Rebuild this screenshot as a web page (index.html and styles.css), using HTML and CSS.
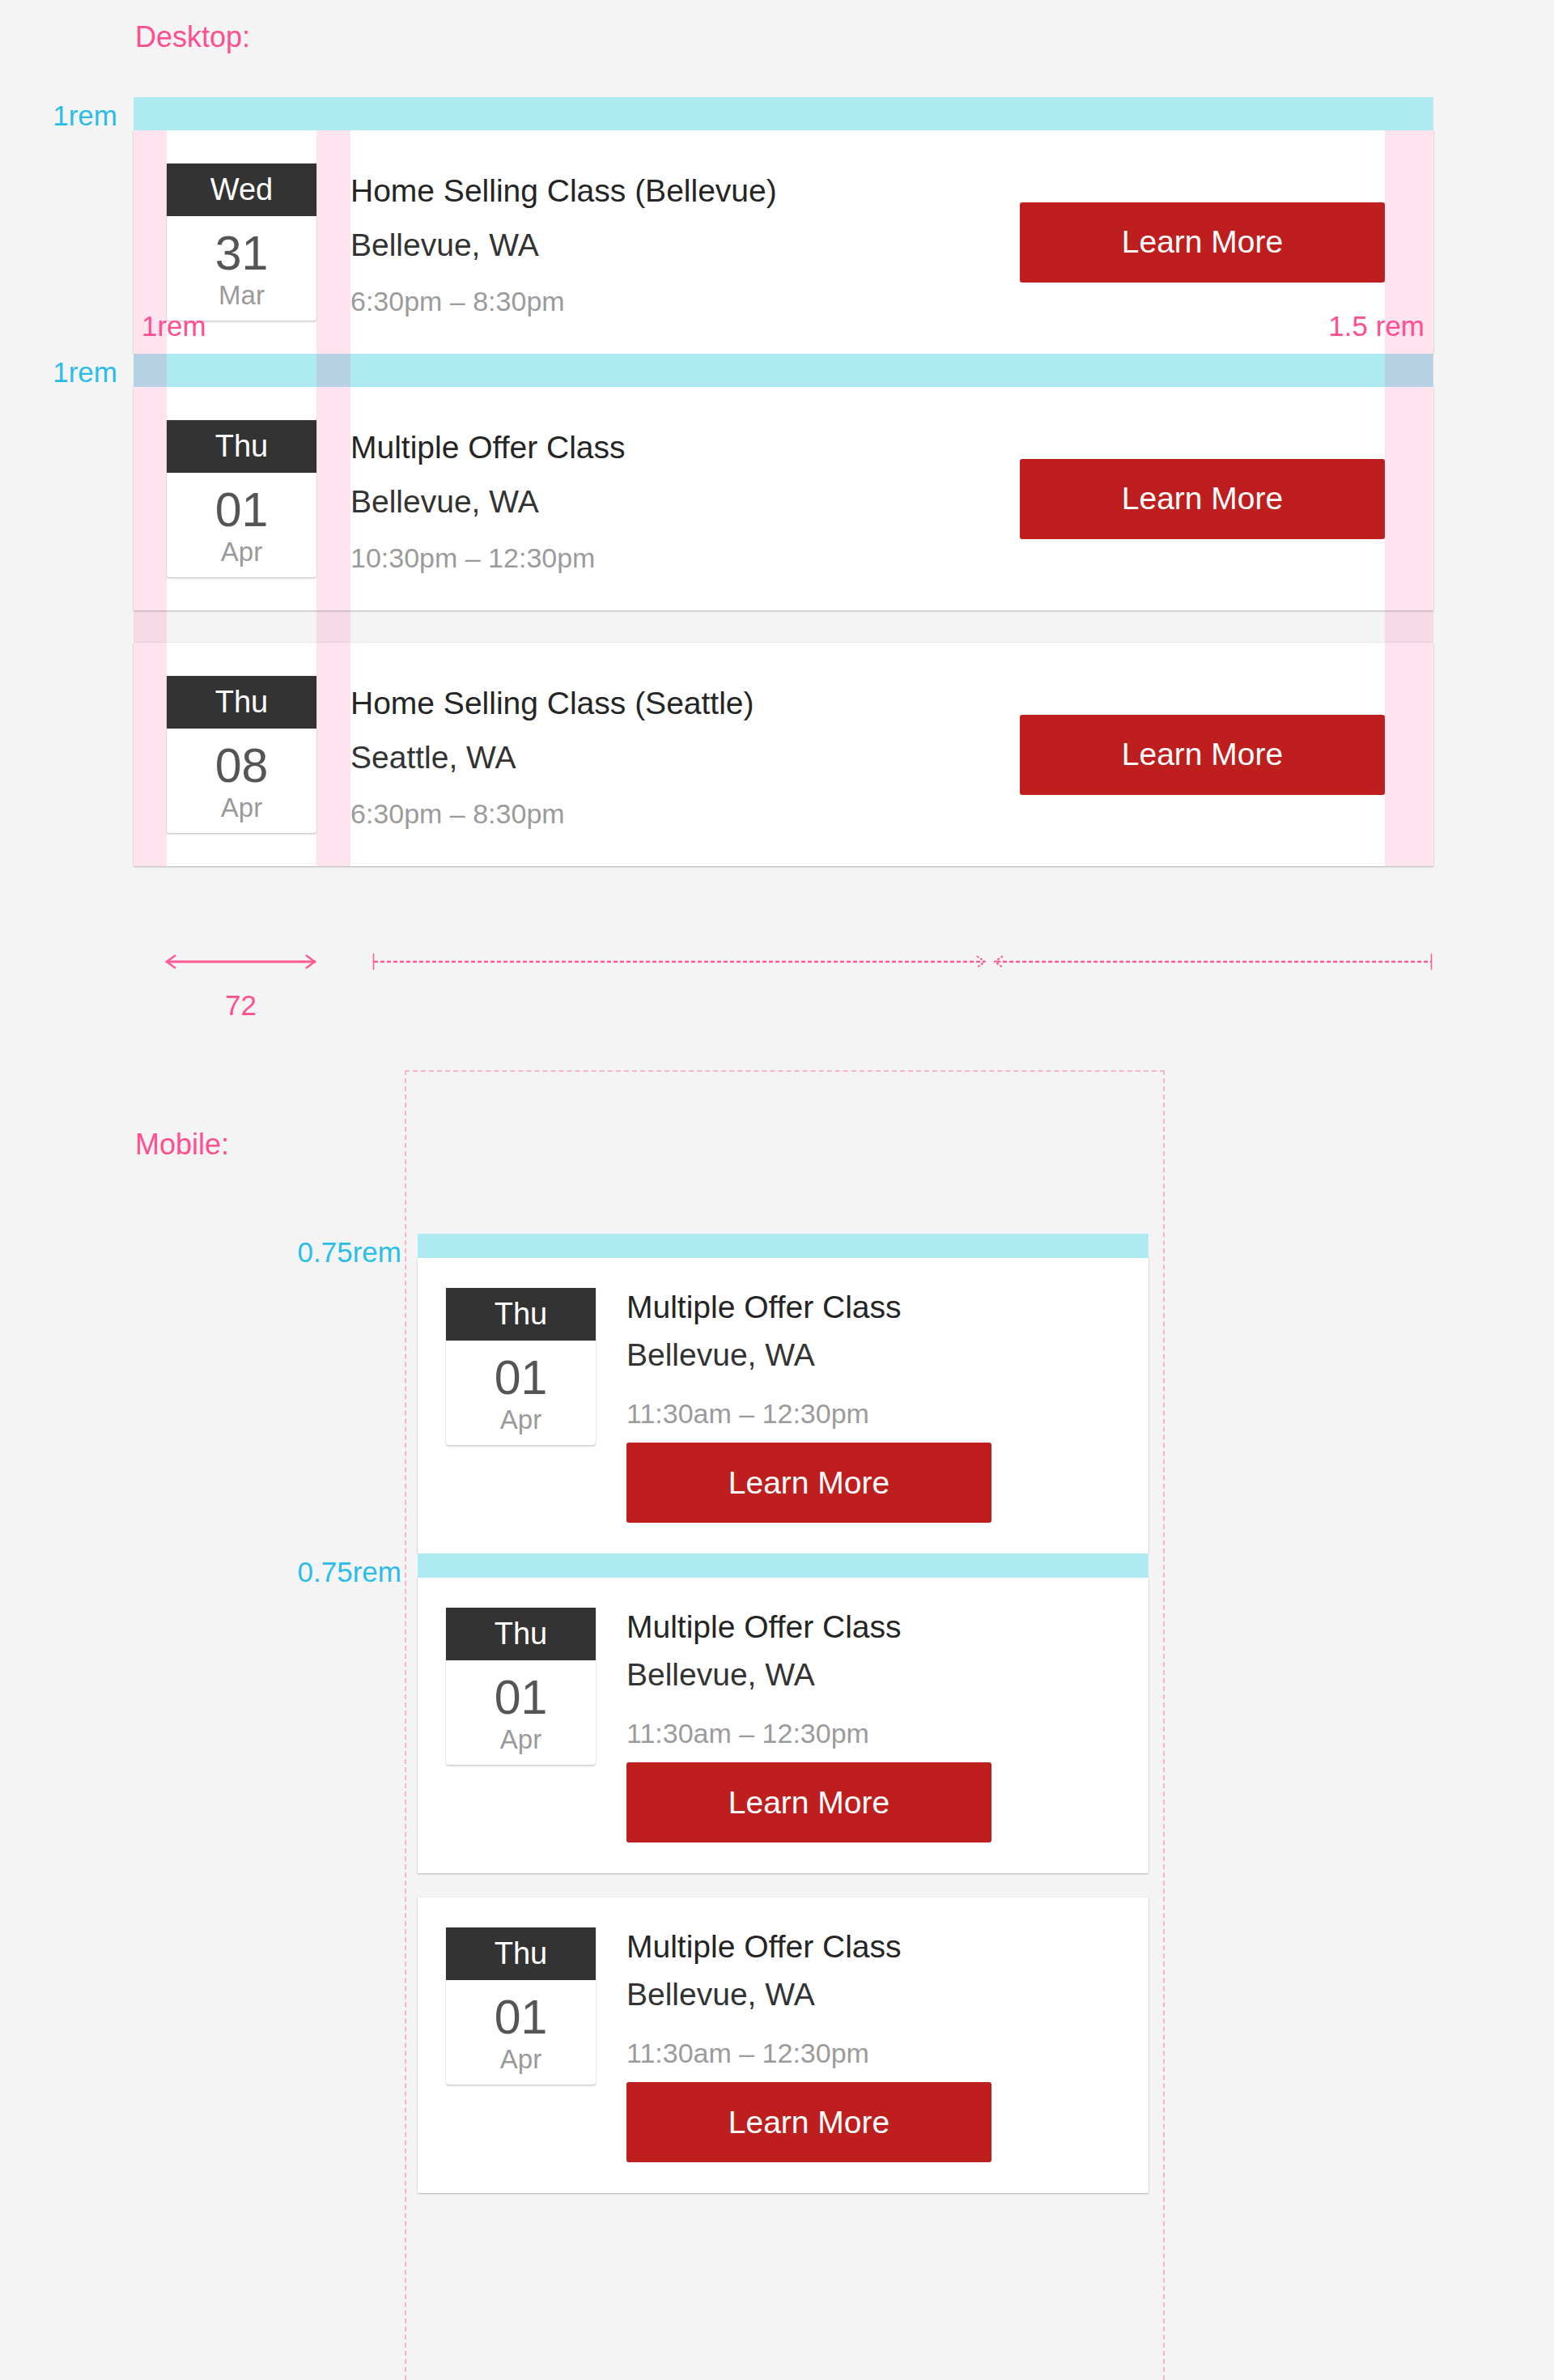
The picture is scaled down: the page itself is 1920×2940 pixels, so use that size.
FILE: index.html
```html
<!DOCTYPE html>
<html lang="en">
<head>
  <meta charset="UTF-8">
  <title>Event Card Spec</title>
  <link rel="stylesheet" href="styles.css">
</head>
<body>

  <div class="page">

    <section class="spec spec-desktop">
      <h2 class="spec-title">Desktop:</h2>

      <div class="event-list">
        <div class="guide-margin"><span class="note note-blue">1rem</span></div>

        <article class="event">
          <div class="date-box">
            <div class="date-day">Wed</div>
            <div class="date-num">31</div>
            <div class="date-month">Mar</div>
          </div>
          <div class="event-info">
            <div class="event-name">Home Selling Class (Bellevue)</div>
            <div class="event-place">Bellevue, WA</div>
            <div class="event-time">6:30pm – 8:30pm</div>
          </div>
          <a class="event-btn" href="#">Learn More</a>
        </article>

        <div class="guide-margin"><span class="note note-blue">1rem</span></div>

        <article class="event">
          <div class="date-box">
            <div class="date-day">Thu</div>
            <div class="date-num">01</div>
            <div class="date-month">Apr</div>
          </div>
          <div class="event-info">
            <div class="event-name">Multiple Offer Class</div>
            <div class="event-place">Bellevue, WA</div>
            <div class="event-time">10:30pm – 12:30pm</div>
          </div>
          <a class="event-btn" href="#">Learn More</a>
        </article>

        <div class="event-gap"></div>

        <article class="event">
          <div class="date-box">
            <div class="date-day">Thu</div>
            <div class="date-num">08</div>
            <div class="date-month">Apr</div>
          </div>
          <div class="event-info">
            <div class="event-name">Home Selling Class (Seattle)</div>
            <div class="event-place">Seattle, WA</div>
            <div class="event-time">6:30pm – 8:30pm</div>
          </div>
          <a class="event-btn" href="#">Learn More</a>
        </article>

        <!-- padding guides drawn over the cards -->
        <div class="guide-pad guide-pad-left"></div>
        <div class="guide-pad guide-pad-date"></div>
        <div class="guide-pad guide-pad-right"></div>
        <span class="note note-pink note-pad-left">1rem</span>
        <span class="note note-pink note-pad-right">1.5 rem</span>
      </div>

      <div class="measure">
        <svg class="measure-lines" width="1606" height="40" viewBox="0 0 1606 40">
          <g stroke="#ff5b97" fill="none">
            <line x1="40" y1="20" x2="225" y2="20" stroke-width="3"/>
            <polyline points="52,12 41,20 52,28" stroke-width="2.5"/>
            <polyline points="213,12 224,20 213,28" stroke-width="2.5"/>

            <line x1="296.5" y1="10" x2="296.5" y2="30" stroke-width="1.5"/>
            <line x1="297" y1="20" x2="1051" y2="20" stroke-width="2.5" stroke-dasharray="5 3"/>
            <polyline points="1042,13 1052,20 1042,27" stroke-width="2" stroke-dasharray="3 2"/>

            <polyline points="1074,13 1064,20 1074,27" stroke-width="2" stroke-dasharray="3 2"/>
            <line x1="1066" y1="20" x2="1603" y2="20" stroke-width="2.5" stroke-dasharray="5 3"/>
            <line x1="1603.5" y1="10" x2="1603.5" y2="30" stroke-width="1.5"/>
          </g>
        </svg>
        <span class="note note-pink measure-label">72</span>
      </div>
    </section>

    <section class="spec spec-mobile">
      <h2 class="spec-title">Mobile:</h2>

      <div class="mobile-frame">
        <div class="event-list event-list-mobile">
          <div class="guide-margin guide-margin-sm"><span class="note note-blue">0.75rem</span></div>

          <article class="event event-stacked">
            <div class="date-box">
              <div class="date-day">Thu</div>
              <div class="date-num">01</div>
              <div class="date-month">Apr</div>
            </div>
            <div class="event-info">
              <div class="event-name">Multiple Offer Class</div>
              <div class="event-place">Bellevue, WA</div>
              <div class="event-time">11:30am – 12:30pm</div>
            </div>
            <a class="event-btn" href="#">Learn More</a>
          </article>

          <div class="guide-margin guide-margin-sm"><span class="note note-blue">0.75rem</span></div>

          <article class="event event-stacked">
            <div class="date-box">
              <div class="date-day">Thu</div>
              <div class="date-num">01</div>
              <div class="date-month">Apr</div>
            </div>
            <div class="event-info">
              <div class="event-name">Multiple Offer Class</div>
              <div class="event-place">Bellevue, WA</div>
              <div class="event-time">11:30am – 12:30pm</div>
            </div>
            <a class="event-btn" href="#">Learn More</a>
          </article>

          <div class="event-gap event-gap-sm"></div>

          <article class="event event-stacked">
            <div class="date-box">
              <div class="date-day">Thu</div>
              <div class="date-num">01</div>
              <div class="date-month">Apr</div>
            </div>
            <div class="event-info">
              <div class="event-name">Multiple Offer Class</div>
              <div class="event-place">Bellevue, WA</div>
              <div class="event-time">11:30am – 12:30pm</div>
            </div>
            <a class="event-btn" href="#">Learn More</a>
          </article>
        </div>
      </div>
    </section>

  </div>

</body>
</html>
```

FILE: styles.css
```css
body {
  margin: 0;
  background-color: #f4f4f4;
  font-family: 'Liberation Sans', Arial, sans-serif;
  color: #333;
}

.page {
  height: 2940px;
  overflow: hidden;
  box-sizing: border-box;
  padding: 24px 0 0 165px;
  display: flex;
  flex-direction: column;
}

.spec-title {
  margin: 0;
  padding-left: 2px;
  font-size: 36px;
  line-height: 44px;
  font-weight: normal;
  color: #ff4f91;
}

.spec-desktop {
  width: 1606px;
}

/* annotations */
.note {
  font-size: 35px;
  line-height: 40px;
  white-space: nowrap;
}

.note-blue {
  position: absolute;
  right: calc(100% + 20px);
  top: 3px;
  color: #2bbde9;
}

.note-pink {
  color: #ff4f91;
}

/* list + guides */
.event-list {
  position: relative;
  margin-top: 52px;
}

.guide-margin {
  position: relative;
  height: 41px;
  background: #aeeaf2;
}

.guide-margin-sm {
  height: 30px;
}

.event-gap {
  height: 40px;
}

.event-gap-sm {
  height: 30px;
}

.guide-pad {
  position: absolute;
  top: 41px;
  bottom: 0;
  background: rgba(255, 0, 100, 0.105);
}

.guide-pad-left {
  left: 0;
  width: 41px;
}

.guide-pad-date {
  left: 226px;
  width: 42px;
}

.guide-pad-right {
  right: 0;
  width: 60px;
}

.note-pad-left {
  position: absolute;
  left: 10px;
  top: 263px;
}

.note-pad-right {
  position: absolute;
  right: 11px;
  top: 263px;
}

/* event card */
.event {
  background: #fff;
  box-shadow: 0 1px 2px rgba(0,0,0,0.25), 0 0 1px rgba(0,0,0,0.12);
  display: grid;
  grid-template-columns: 185px 1fr 451px;
  column-gap: 42px;
  align-items: center;
  padding: 41px 60px 41px 41px;
}

.date-box {
  width: 185px;
  background: #fff;
  text-align: center;
  border-radius: 0 0 3px 3px;
  box-shadow: 0 0 1px rgba(0,0,0,0.35), 0 2px 2px rgba(0,0,0,0.15);
}

.date-day {
  background: #333;
  color: #fff;
  font-size: 38px;
  line-height: 65px;
}

.date-num {
  padding-top: 14px;
  font-size: 59px;
  line-height: 64px;
  color: #555;
}

.date-month {
  padding-bottom: 11px;
  font-size: 33px;
  line-height: 40px;
  color: #9a9a9a;
}

.event-info {
  align-self: start;
}

.event-name {
  font-size: 39px;
  line-height: 67px;
  color: #252525;
}

.event-place {
  font-size: 39px;
  line-height: 67px;
  color: #333;
}

.event-time {
  margin-top: 13px;
  font-size: 34px;
  line-height: 47px;
  color: #9b9b9b;
}

.event-btn {
  display: flex;
  align-items: center;
  justify-content: center;
  height: 99px;
  background: #bf1e1e;
  color: #fff;
  font-size: 39px;
  text-decoration: none;
  border-radius: 3px;
}

/* measurement row */
.measure {
  margin-top: 98px;
}

.measure-lines {
  display: block;
}

.measure-label {
  display: block;
  width: 265px;
  margin-top: 14px;
  text-align: center;
}

/* mobile */
.spec-mobile {
  flex: 1;
  display: flex;
  margin-top: 60px;
}

.spec-mobile .spec-title {
  width: 335px;
  box-sizing: border-box;
  margin-top: 70px;
}

.mobile-frame {
  width: 939px;
  box-sizing: border-box;
  border: 2px dashed #f8b4cd;
  border-bottom: none;
  padding: 200px 0 0 14px;
}

.event-list-mobile {
  width: 903px;
  margin-top: 0;
}

.event-stacked {
  grid-template-columns: 185px 451px;
  grid-template-rows: auto auto;
  column-gap: 38px;
  align-items: start;
  padding: 37px 0 38px 35px;
}

.event-stacked .date-box {
  grid-row: 1 / 3;
}

.event-stacked .event-name {
  line-height: 48px;
}

.event-stacked .event-place {
  margin-top: 11px;
  line-height: 48px;
}

.event-stacked .event-time {
  margin-top: 24px;
  line-height: 48px;
}

.event-stacked .event-btn {
  margin-top: 12px;
}
```
